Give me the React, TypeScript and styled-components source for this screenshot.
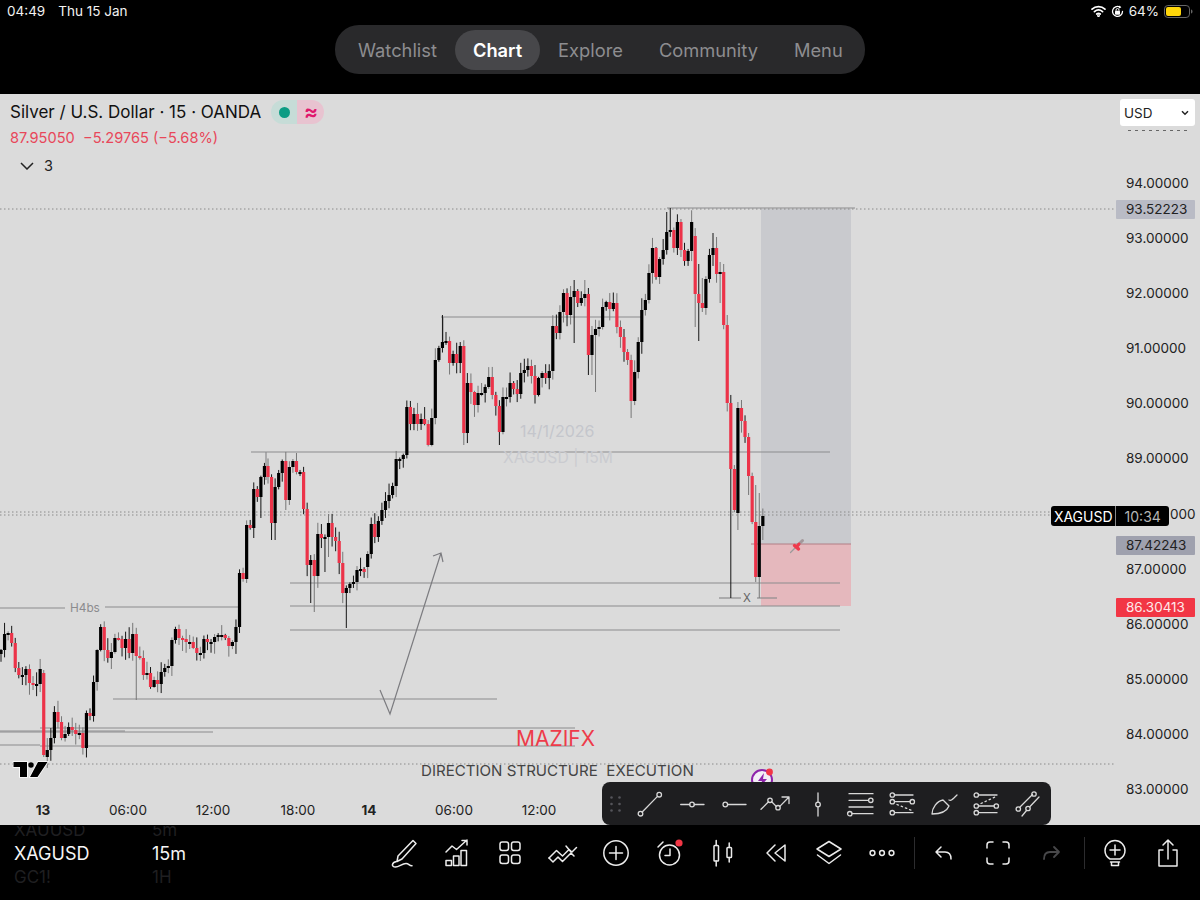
import React from 'react'
import styled, { createGlobalStyle } from 'styled-components'

const FONT = 'Inter, "Liberation Sans", sans-serif'
const RED = '#f23645'
const TOP = 94

const GlobalStyle = createGlobalStyle`
  html, body {
    margin: 0;
    padding: 0;
    background: #000;
    font-family: ${FONT};
  }
`

// y of each close in page pixels, one candle every 3.56px from x=1
const closes = [
  650, 634, 633, 643, 668, 675, 675, 669, 683, 685, 684, 669, 755, 750, 738, 712, 722, 738, 734, 727,
  730, 734, 733, 748, 713, 716, 682, 650, 627, 650, 658, 652, 638, 639, 648, 639, 653, 634, 656, 658,
  675, 673, 687, 680, 684, 672, 668, 666, 640, 629, 638, 639, 642, 642, 648, 653, 653, 639, 642, 642,
  637, 635, 635, 638, 646, 642, 627, 573, 579, 525, 528, 489, 497, 477, 466, 477, 523, 487, 473, 461,
  500, 467, 461, 472, 472, 509, 565, 560, 576, 534, 538, 537, 523, 537, 541, 563, 593, 588, 584, 582,
  570, 569, 572, 554, 524, 537, 521, 510, 501, 495, 486, 459, 459, 455, 407, 424, 414, 424, 419, 424,
  445, 418, 360, 348, 342, 341, 363, 354, 363, 346, 433, 383, 392, 405, 393, 393, 387, 377, 395, 406,
  432, 397, 397, 383, 389, 394, 373, 370, 366, 376, 395, 378, 373, 378, 371, 326, 333, 312, 293, 315,
  297, 291, 303, 298, 294, 355, 335, 329, 327, 307, 302, 309, 303, 327, 337, 352, 360, 401, 372, 342,
  310, 300, 273, 248, 277, 259, 250, 232, 230, 248, 222, 250, 261, 251, 222, 294, 303, 308, 279, 255,
  248, 274, 272, 325, 403, 469, 510, 408, 421, 437, 476, 522, 577, 526, 516,
]

const openOverrides: Record<number, number> = { 12: 673, 13: 757, 103: 567, 195: 236, 207: 513 }

const wickOverrides: Record<number, [number | null, number | null]> = {
  12: [null, 757], 38: [null, 700], 67: [null, 633], 71: [null, 538], 73: [null, 518], 76: [null, 540],
  77: [null, 540], 80: [null, 510], 83: [453, null], 87: [null, 603], 88: [null, 612], 91: [null, 572],
  92: [514, 557], 97: [null, 628], 124: [315, null], 130: [null, 445], 140: [null, 445], 161: [280, 343],
  164: [280, null], 165: [null, 375], 166: [null, 375], 167: [null, 392], 177: [null, 418], 187: [212, null],
  188: [208, null], 195: [null, 327], 196: [264, 341], 197: [278, 312], 200: [233, null], 201: [237, null],
  202: [262, 303], 203: [264, null], 204: [315, null], 205: [null, 598], 207: [402, 530], 208: [400, null],
  210: [null, 495], 212: [485, 582], 213: [493, 598], 214: [null, 540],
}

const noise = (n: number) => {
  const v = Math.sin(n * 12.9898) * 43758.5453
  return v - Math.floor(v)
}

const candles = closes.map((close, i) => {
  const open = openOverrides[i] ?? (i ? closes[i - 1] : 654)
  const top = Math.min(open, close)
  const bottom = Math.max(open, close)
  const [hi, lo] = wickOverrides[i] ?? [null, null]
  return {
    x: 1 + i * 3.56,
    top,
    height: Math.max(bottom - top, 2),
    high: hi ?? top - 1 - noise(i) * 11,
    low: lo ?? bottom + 1 + noise(i + 500) * 11,
    down: close > open,
    wick: noise(i + 900) > 0.55 ? '#777' : '#161616',
  }
})

const solidLines = [
  [667, 208, 855, 208], [441, 317, 642, 317], [251, 452, 830, 452], [0, 608, 65, 608], [105, 607, 240, 607],
  [290, 583, 840, 583], [290, 606, 840, 606], [290, 630, 840, 630], [719, 598, 741, 598], [757, 598, 777, 598],
  [113, 699, 497, 699], [40, 728, 575, 728], [0, 731, 125, 731], [0, 732, 213, 732], [0, 745, 40, 745], [40, 746, 575, 746],
  [443, 317, 443, 345], [266, 452, 266, 480],
]

const dottedLines = [209, 512, 515, 764]

const priceTicks = [94, 93, 92, 91, 90, 89, 87, 86, 85, 84, 83]
const priceY: Record<number, number> = { 94: 182, 93: 237, 92: 292, 91: 347, 90: 402, 89: 457, 87: 568, 86: 623, 85: 678, 84: 733, 83: 788 }
const timeTicks = [
  { x: 43, label: '13', bold: true },
  { x: 128, label: '06:00' },
  { x: 213, label: '12:00' },
  { x: 298, label: '18:00' },
  { x: 369, label: '14', bold: true },
  { x: 454, label: '06:00' },
  { x: 539, label: '12:00' },
]
const tabs = ['Watchlist', 'Chart', 'Explore', 'Community', 'Menu']

const Page = styled.div`
  width: 1200px;
  height: 900px;
  display: flex;
  flex-direction: column;
  overflow: hidden;
  background: #000;
`

const Header = styled.header`
  height: ${TOP}px;
  flex: none;
  display: flex;
  flex-direction: column;
  align-items: center;
  background: #000;
`

const StatusBar = styled.div`
  width: 100%;
  height: 22px;
  box-sizing: border-box;
  padding: 0 7px 0 7px;
  display: flex;
  align-items: center;
  justify-content: space-between;
  color: #f2f2f2;
  font-size: 13.5px;
`

const StatusGroup = styled.div<{ $gap: number }>`
  display: flex;
  align-items: center;
  gap: ${({ $gap }) => $gap}px;
`

const TabBar = styled.nav`
  margin-top: 3px;
  width: 530px;
  height: 49px;
  box-sizing: border-box;
  padding: 0 5px;
  display: flex;
  align-items: center;
  border-radius: 24px;
  background: #29292b;
`

const Tab = styled.div<{ $active?: boolean }>`
  height: 40px;
  padding: 0 18px;
  display: flex;
  align-items: center;
  border-radius: 20px;
  font-size: 18.3px;
  font-weight: ${({ $active }) => ($active ? 600 : 400)};
  color: ${({ $active }) => ($active ? '#fff' : '#8d8d90')};
  background: ${({ $active }) => ($active ? '#47474a' : 'transparent')};
`

const ChartPane = styled.main`
  position: relative;
  height: 731px;
  flex: none;
  background: #dbdbdb;
  overflow: hidden;
`

const ChartCanvas = styled.svg`
  position: absolute;
  inset: 0;
  width: 1200px;
  height: 731px;
`

const Legend = styled.div`
  position: absolute;
  left: 10px;
  top: 6px;
  display: flex;
  flex-direction: column;
`

const LegendTitle = styled.div`
  display: flex;
  align-items: center;
  gap: 10px;
  height: 24px;
  font-size: 17px;
  color: #111;
  white-space: nowrap;
`

const StatusPill = styled.div`
  width: 53px;
  height: 24px;
  display: flex;
  border-radius: 12px;
  background: linear-gradient(90deg, #c6dcd7 50%, #e8c3d0 50%);
`

const PillSide = styled.div`
  flex: 1;
  display: flex;
  align-items: center;
  justify-content: center;
`

const GreenDot = styled.span`
  width: 11px;
  height: 11px;
  border-radius: 50%;
  background: #0c9c84;
`

const Wave = styled.span`
  font-size: 21px;
  font-weight: 600;
  line-height: 24px;
  color: #e0176c;
`

const LegendValues = styled.div`
  margin-top: 4px;
  height: 20px;
  display: flex;
  align-items: center;
  font-size: 14.6px;
  color: #e8475a;
  white-space: pre;
`

const LegendCollapse = styled.div`
  margin: 9px 0 0 10px;
  display: flex;
  align-items: center;
  gap: 10px;
  font-size: 14.5px;
  color: #222;
`

const CurrencySelect = styled.div`
  position: absolute;
  left: 1120px;
  top: 5px;
  width: 75px;
  height: 27px;
  box-sizing: border-box;
  padding: 0 6px 0 4px;
  display: flex;
  align-items: center;
  justify-content: space-between;
  border-radius: 3px;
  background: #fff;
  font-size: 13.5px;
  color: #222;
`

const Annotation = styled.div<{ $x: number; $y: number; $size: number; $color: string }>`
  position: absolute;
  left: ${({ $x }) => $x}px;
  top: ${({ $y }) => $y - TOP}px;
  transform: translateY(-50%);
  font-size: ${({ $size }) => $size}px;
  color: ${({ $color }) => $color};
  white-space: pre;
`

const PriceLabel = styled.div<{ $y: number; $bg?: string; $color?: string }>`
  position: absolute;
  left: 1116px;
  top: ${({ $y }) => $y - TOP - 9}px;
  width: 79px;
  height: 19px;
  box-sizing: border-box;
  padding-left: 10px;
  display: flex;
  align-items: center;
  border-radius: 1px;
  background: ${({ $bg }) => $bg ?? 'transparent'};
  color: ${({ $color }) => $color ?? '#222'};
  font-size: 13.5px;
`

const CountdownTag = styled.div`
  position: absolute;
  left: 1051px;
  top: ${506 - TOP}px;
  width: 118px;
  height: 20px;
  display: flex;
  border-radius: 3px;
  background: #000;
  font-size: 14px;
`

const TagCell = styled.div<{ $width: number; $color: string }>`
  width: ${({ $width }) => $width}px;
  display: flex;
  align-items: center;
  justify-content: center;
  color: ${({ $color }) => $color};
  & + & {
    border-left: 1px solid #8a8a8a;
  }
`

const TimeLabel = styled.div<{ $x: number; $bold?: boolean }>`
  position: absolute;
  left: ${({ $x }) => $x}px;
  top: ${810 - TOP}px;
  transform: translate(-50%, -50%);
  font-size: 13.5px;
  font-weight: ${({ $bold }) => ($bold ? 700 : 400)};
  color: #222;
`

const DrawingBar = styled.div`
  position: absolute;
  left: 602px;
  bottom: 0;
  width: 449px;
  height: 43px;
  display: flex;
  align-items: center;
  border-radius: 8px;
  background: #1e1e20;
`

const GripCell = styled.div`
  width: 27px;
  display: flex;
  justify-content: center;
`

const DrawCell = styled.div`
  width: 42px;
  display: flex;
  justify-content: center;
`

const BottomBar = styled.footer`
  height: 75px;
  flex: none;
  display: flex;
  overflow: hidden;
  background: #000;
`

const SymbolPicker = styled.div`
  width: 377px;
  flex: none;
  box-sizing: border-box;
  padding: 1px 0 0 14px;
`

const SymbolRow = styled.div<{ $active?: boolean }>`
  height: 24px;
  display: grid;
  grid-template-columns: 138px 1fr;
  align-items: center;
  font-size: ${({ $active }) => ($active ? 18 : 17)}px;
  color: ${({ $active }) => ($active ? '#f5f5f5' : '#1f1f21')};
`

// the wheel's previous row slides out under the chart, so its top is clipped
const FadedRowTop = styled(SymbolRow)`
  height: 15px;
  align-items: start;
  line-height: 9px;
  overflow: hidden;
`

const ActionRow = styled.div`
  height: 56px;
  display: flex;
  align-items: center;
`

const ActionCell = styled.div`
  width: 53.2px;
  flex: none;
  display: flex;
  justify-content: center;
`

const ActionDivider = styled.div<{ $left: number; $right: number }>`
  width: 1px;
  height: 32px;
  flex: none;
  margin: 0 ${({ $right }) => $right}px 0 ${({ $left }) => $left}px;
  background: #2c2c2e;
`

const IconSvg = styled.svg.attrs({ viewBox: '0 0 32 32', width: 32, height: 32, fill: 'none' })<{ $stroke?: string; $weight?: number }>`
  display: block;
  stroke: ${({ $stroke }) => $stroke ?? '#ececec'};
  stroke-width: ${({ $weight }) => $weight ?? 1.5};
  stroke-linecap: round;
  stroke-linejoin: round;
`

const Dash = styled.path`
  stroke-dasharray: 1.5 3;
`

const WifiIcon = () => (
  <svg width="15" height="12" viewBox="0 0 17 13" fill="none" stroke="#fff" strokeWidth="2" strokeLinecap="round">
    <path d="M1.2 4.4C5.2.7 11.8.7 15.8 4.4" />
    <path d="M3.9 7.2C6.6 4.9 10.4 4.9 13.1 7.2" />
    <path d="M6.5 9.9C7.7 9 9.3 9 10.5 9.9" />
    <circle cx="8.5" cy="11.8" r="0.6" />
  </svg>
)

const RotationLockIcon = () => (
  <svg width="13" height="13" viewBox="0 0 13 13" fill="none">
    <path d="M11.5 6.5A5 5 0 1 1 8.8 2" stroke="#fff" strokeWidth="1.3" strokeLinecap="round" />
    <path d="M8.2 .6 10.4 2.3 8 3.6Z" fill="#fff" />
    <rect x="4" y="5.8" width="5" height="4" rx=".8" fill="#fff" />
    <path d="M5 5.8V5a1.5 1.5 0 0 1 3 0v.8" stroke="#fff" strokeWidth="1" />
  </svg>
)

const BatteryIcon = () => (
  <svg width="29" height="13" viewBox="0 0 29 13">
    <rect x=".5" y=".5" width="25" height="12" rx="3.4" fill="none" stroke="#666" />
    <rect x="2" y="2" width="15" height="9" rx="2" fill="#ffd60a" />
    <path d="M27 4.5c1 .3 1.5 1.1 1.5 2s-.5 1.7-1.5 2Z" fill="#666" />
  </svg>
)

const Pin = () => (
  <g fill="none" strokeLinecap="round">
    <path d="M790.5 552.5 795 548" stroke="#9a9a9a" strokeWidth="1.2" />
    <path d="M798 545 802.5 540.5" stroke="#a3989b" strokeWidth="3" />
    <path d="M794.5 545.5 798.5 549" stroke="#ef3a4c" strokeWidth="3.4" />
    <path d="M796.5 547 799 544" stroke="#ef3a4c" strokeWidth="3" />
  </g>
)

const drawIcons = [
  <>
    <path d="M8.2 24 L23.5 8.4" />
    <circle cx="6.5" cy="25.7" r="2.3" />
    <circle cx="25.2" cy="6.7" r="2.3" />
  </>,
  <>
    <path d="M4.7 16.5H13.7M18.3 16.5H28" />
    <circle cx="16" cy="16.5" r="2.3" />
  </>,
  <>
    <path d="M9.6 16.5H28" />
    <circle cx="7.3" cy="16.5" r="2.3" />
  </>,
  <>
    <path d="M1 21.3 8.5 13.8M11.7 13.8 16.2 18.4M19.8 18.4 29 9M22 9H29V15.5" />
    <circle cx="10" cy="12.3" r="2.2" />
    <circle cx="18" cy="19.7" r="2.2" />
  </>,
  <>
    <path d="M16 5V14.2M16 18.8V28" />
    <circle cx="16" cy="16.5" r="2.3" />
  </>,
  <>
    <path d="M5 5.7H29M5 12.3H24.5M5 19H29M8 25.7H29" />
    <circle cx="26.8" cy="12.3" r="2.2" />
    <circle cx="5.8" cy="25.7" r="2.2" />
  </>,
  <>
    <path d="M8.5 7H27M8.5 13.7H24M8.5 24.7H27" />
    <Dash d="M11 16.5 27 23" />
    <circle cx="6.3" cy="7" r="2.2" />
    <circle cx="6.3" cy="13.7" r="2.2" />
    <circle cx="26.3" cy="13.7" r="2.2" />
    <circle cx="6.3" cy="24.7" r="2.2" />
  </>,
  <>
    <path d="M4 26 C4 20 9 13 15 12 L21 18 C19 23 14 26 4 26Z" />
    <path d="M21 12 C23 13 24 12 29 7" />
  </>,
  <>
    <path d="M8.5 7H27M8.5 18H24M8.5 24.7H27" />
    <Dash d="M11 15.5 25 9" />
    <circle cx="6.3" cy="7" r="2.2" />
    <circle cx="6.3" cy="18" r="2.2" />
    <circle cx="26.3" cy="18" r="2.2" />
    <circle cx="6.3" cy="24.7" r="2.2" />
  </>,
  <>
    <path d="M8 19 20.5 6.5M10 28 14.5 22.5M18 18.5 27 9" />
    <circle cx="6.3" cy="21" r="2.2" />
    <circle cx="22" cy="6" r="2.2" />
    <circle cx="16" cy="20.5" r="2.2" />
  </>,
]

const actionIcons = [
  <>
    <path d="M25 3.5 28 6.5 14 22 9 24.5 10 19Z" />
    <path d="M8.5 24.5C3.5 25.5 3 30 7.5 30 11 30 14 26.5 18 26.5 21 26.5 21 29 24 28.8" />
  </>,
  <>
    <path d="M5 15 11 9 15.5 12.5 26 3M21 3.5H26V8" />
    <rect x="5" y="23.5" width="5.5" height="5" />
    <rect x="12.5" y="19" width="5.5" height="9.5" />
    <rect x="20" y="13.5" width="5.5" height="15" />
  </>,
  <>
    <rect x="6" y="5" width="8.5" height="8.5" rx="2.2" />
    <rect x="17.5" y="5" width="8.5" height="8.5" rx="2.2" />
    <rect x="6" y="18" width="8.5" height="8.5" rx="2.2" />
    <rect x="17.5" y="18" width="8.5" height="8.5" rx="2.2" />
  </>,
  <>
    <path d="M2 21 9.5 13.5 15.5 19 22 12.5 25 15 29.5 10.5" />
    <path d="M2 21 6 25 11 20 15.5 24.5 24 16 27 19" />
    <path d="M19 9 24 15" />
  </>,
  <>
    <circle cx="16" cy="16" r="12.2" />
    <path d="M16 9.5V22.5M9.5 16H22.5" />
  </>,
  <>
    <circle cx="15.5" cy="18" r="10" />
    <path d="M16 12V18.5H11M4 10 9 5" />
    <circle cx="25" cy="6" r="3.6" fill="#f23645" stroke="none" />
  </>,
  <>
    <rect x="7" y="8.5" width="4.5" height="15.5" rx=".8" />
    <rect x="20" y="10.5" width="4.5" height="10" rx=".8" />
    <path d="M9.2 3.5V8.5M9.2 24V29M22.2 6V10.5M22.2 20.5V25" />
  </>,
  <>
    <path d="M25 8 15 16 25 24Z" />
    <path d="M15 8 7 16 15 24" />
  </>,
  <>
    <path d="M16 4.5 28 12 16 19.5 4 12Z" />
    <path d="M4.5 18 16 26.5 27.5 18" />
  </>,
  <>
    <circle cx="6.5" cy="16" r="2.4" />
    <circle cx="16" cy="16" r="2.4" />
    <circle cx="25.5" cy="16" r="2.4" />
  </>,
]

const BottomIcon = ({ children, stroke, weight }: { children: React.ReactNode; stroke?: string; weight?: number }) => (
  <ActionCell>
    <IconSvg $stroke={stroke} $weight={weight}>{children}</IconSvg>
  </ActionCell>
)

const App = () => (
  <Page>
    <GlobalStyle />
    <Header>
      <StatusBar>
        <StatusGroup $gap={13}>
          <span>04:49</span>
          <span>Thu 15 Jan</span>
        </StatusGroup>
        <StatusGroup $gap={5}>
          <WifiIcon />
          <RotationLockIcon />
          <span>64%</span>
          <BatteryIcon />
        </StatusGroup>
      </StatusBar>
      <TabBar>
        {tabs.map((tab) => (
          <Tab key={tab} $active={tab === 'Chart'}>{tab}</Tab>
        ))}
      </TabBar>
    </Header>

    <ChartPane>
      <ChartCanvas viewBox={`0 ${TOP} 1200 731`}>
        <rect x="761" y="209" width="90" height="335" fill="#c9cace" />
        <rect x="761" y="544" width="90" height="62" fill="#e5b8bd" />
        <path d="M751 544H851" stroke="#b27e86" strokeWidth="1" />
        <path d="M1128 130.5H1187" stroke="#666" strokeWidth="1" strokeDasharray="3 4" />
        {dottedLines.map((y) => (
          <path key={y} d={`M0 ${y}H1115`} stroke="#8a8a8a" strokeWidth="1" strokeDasharray="1.5 2.5" />
        ))}
        {solidLines.map(([x1, y1, x2, y2]) => (
          <line key={`${x1}-${y1}-${x2}`} x1={x1} y1={y1} x2={x2} y2={y2} stroke="#8b8b8e" strokeWidth="1.2" />
        ))}
        <path d="M380 690 390 714 441 553M433 556 441 553 443 562" fill="none" stroke="#7c7c80" strokeWidth="1.2" />
        {candles.map((c) => (
          <g key={c.x}>
            <line x1={c.x} x2={c.x} y1={c.high} y2={c.low} stroke={c.wick} strokeWidth="1" />
            <rect x={c.x - 1.6} y={c.top} width="3.2" height={c.height} fill={c.down ? '#ec3349' : '#000'} />
          </g>
        ))}
        <Pin />
        <g>
          <path
            d="M13.5 762H27V777H20V767H13.5Z M38 762H47.5L37.5 777H30Z"
            fill="#000"
            stroke="#fff"
            strokeWidth="1.6"
            paintOrder="stroke"
          />
          <circle cx="31" cy="765" r="2.7" fill="#000" />
        </g>
        <circle cx="762" cy="780" r="10" fill="#f3eef6" stroke="#8e24aa" strokeWidth="2" />
        <path d="M764 773 758 781H762L760 787 767 779H763Z" fill="#8e24aa" />
        <circle cx="769.5" cy="772" r="3.4" fill={RED} />
      </ChartCanvas>

      <Legend>
        <LegendTitle>
          <span>Silver / U.S. Dollar · 15 · OANDA</span>
          <StatusPill>
            <PillSide><GreenDot /></PillSide>
            <PillSide><Wave>≈</Wave></PillSide>
          </StatusPill>
        </LegendTitle>
        <LegendValues>87.95050  −5.29765 (−5.68%)</LegendValues>
        <LegendCollapse>
          <svg width="14" height="8" viewBox="0 0 14 8" fill="none" stroke="#222" strokeWidth="1.5">
            <path d="M1 1 7 7 13 1" />
          </svg>
          <span>3</span>
        </LegendCollapse>
      </Legend>

      <CurrencySelect>
        <span>USD</span>
        <svg width="8" height="6" viewBox="0 0 8 6" fill="none" stroke="#222" strokeWidth="1.5">
          <path d="M1 1.2 4 4.2 7 1.2" />
        </svg>
      </CurrencySelect>

      <Annotation $x={520} $y={431} $size={16} $color="#c4c6cc">14/1/2026</Annotation>
      <Annotation $x={503} $y={457} $size={15.7} $color="#cacbd0">XAGUSD | 15M</Annotation>
      <Annotation $x={70} $y={608} $size={11.8} $color="#8b8b8e">H4bs</Annotation>
      <Annotation $x={743} $y={598} $size={11.5} $color="#666">X</Annotation>
      <Annotation $x={516} $y={738} $size={21} $color="#ee3b4a">MAZIFX</Annotation>
      <Annotation $x={421} $y={770} $size={15.1} $color="#444">DIRECTION STRUCTURE  EXECUTION</Annotation>
      <Annotation $x={1170} $y={513.5} $size={13.5} $color="#222">000</Annotation>

      {priceTicks.map((p) => (
        <PriceLabel key={p} $y={priceY[p]}>{p.toFixed(5)}</PriceLabel>
      ))}
      <PriceLabel $y={208.5} $bg="#b9bbc5">93.52223</PriceLabel>
      <PriceLabel $y={544.5} $bg="#9fa1ae">87.42243</PriceLabel>
      <PriceLabel $y={606.5} $bg={RED} $color="#ffe9ea">86.30413</PriceLabel>

      <CountdownTag>
        <TagCell $width={65} $color="#fff">XAGUSD</TagCell>
        <TagCell $width={53} $color="#b5b5b5">10:34</TagCell>
      </CountdownTag>

      {timeTicks.map((t) => (
        <TimeLabel key={t.x} $x={t.x} $bold={t.bold}>{t.label}</TimeLabel>
      ))}

      <DrawingBar>
        <GripCell>
          <svg width="11" height="16" viewBox="0 0 11 16" fill="#55555a">
            {[1.5, 8, 14.5].flatMap((y) => [1.5, 9.5].map((x) => <circle key={`${x}-${y}`} cx={x} cy={y} r="1.3" />))}
          </svg>
        </GripCell>
        {drawIcons.map((icon, i) => (
          <DrawCell key={i}>
            <IconSvg $stroke="#d8d8d8" $weight={1.3}>{icon}</IconSvg>
          </DrawCell>
        ))}
      </DrawingBar>
    </ChartPane>

    <BottomBar>
      <SymbolPicker>
        <FadedRowTop><span>XAUUSD</span><span>5m</span></FadedRowTop>
        <SymbolRow $active><span>XAGUSD</span><span>15m</span></SymbolRow>
        <SymbolRow><span>GC1!</span><span>1H</span></SymbolRow>
      </SymbolPicker>
      <ActionRow>
        {actionIcons.map((icon, i) => (
          <BottomIcon key={i}>{icon}</BottomIcon>
        ))}
        <ActionDivider $left={5} $right={3} />
        <BottomIcon>
          <path d="M13 10 8 15 13 20M8 15H17C21 15 23 18 23 22" />
        </BottomIcon>
        <BottomIcon>
          <path d="M11 5H8C6 5 5 6 5 8V11M21 5H24C26 5 27 6 27 8V11M11 27H8C6 27 5 26 5 24V21M21 27H24C26 27 27 26 27 24V21" />
        </BottomIcon>
        <BottomIcon stroke="#48484a" weight={1.8}>
          <path d="M19 10 24 15 19 20M24 15H15C11 15 9 18 9 22" />
        </BottomIcon>
        <ActionDivider $left={7} $right={3} />
        <BottomIcon>
          <path d="M11 22C7.5 20 6 17 6 13.5 6 8 10.5 3.5 16 3.5S26 8 26 13.5C26 17 24.5 20 21 22Z" />
          <path d="M16 8V18M11 13H21M11.5 25H20.5M12.5 25V28.5H19.5V25" />
        </BottomIcon>
        <BottomIcon>
          <path d="M11 13H7V29H25V13H21M16 22V3M11 8 16 3 21 8" />
        </BottomIcon>
      </ActionRow>
    </BottomBar>
  </Page>
)

export default App
